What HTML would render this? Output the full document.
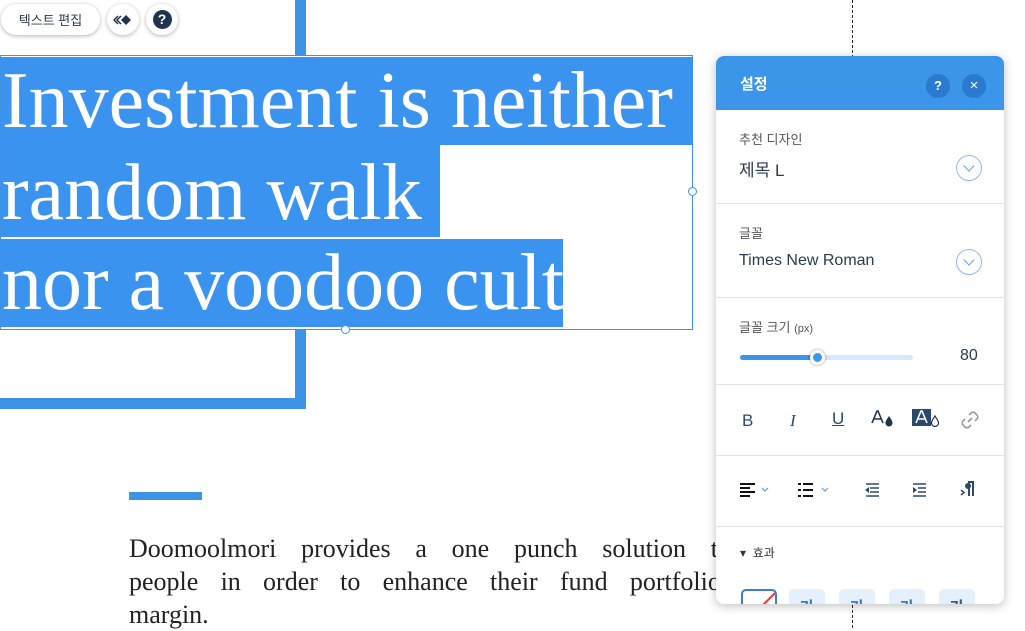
<!DOCTYPE html>
<html><head><meta charset="utf-8"><style>
*{margin:0;padding:0;box-sizing:border-box}
body{width:1025px;height:628px;overflow:hidden;background:#fff;position:relative;font-family:"Liberation Sans","Noto Sans CJK KR",sans-serif}
.abs{position:absolute}
.hl{position:absolute;left:0;background:#3b93f0;color:#fff;font-family:"Liberation Serif",serif;font-size:80px;line-height:88px;white-space:nowrap;padding-left:2px}
.btn{position:absolute;top:4px;height:31px;background:#fff;border-radius:16px;box-shadow:0 1px 4px rgba(0,0,0,.3);display:flex;align-items:center;justify-content:center;font-size:13px;color:#2b3b4e}
.sec{position:absolute;left:0;right:0;height:1px;background:#e0e3e7}
.lbl{position:absolute;left:23px;font-size:13px;color:#555}
.val{position:absolute;left:23px;font-size:17px;color:#2b3b4e}
.chev{position:absolute;right:22px;width:26px;height:26px;border:1.5px solid #8fbbeb;border-radius:50%}
.chev:after{content:"";position:absolute;left:8px;top:6px;width:7px;height:7px;border-right:1.5px solid #5fa0e5;border-bottom:1.5px solid #5fa0e5;transform:rotate(45deg)}
.ic{position:absolute;color:#2b4a6b;font-size:17px}
.pl{position:absolute;left:129px;width:602px;font-family:'Liberation Serif',serif;font-size:26px;line-height:33px;color:#222;text-align:justify;text-align-last:justify}
</style></head><body>
<div class="abs" style="left:295px;top:0;width:11px;height:409px;background:#3d94e6"></div>
<div class="abs" style="left:0;top:398px;width:306px;height:11px;background:#3d94e6"></div>
<div class="abs" style="left:852px;top:0;height:628px;border-left:1.5px dashed #222"></div>
<div class="abs" style="left:0;top:55px;width:693px;height:275px;background:#fff"></div>
<div class="hl" style="top:57px;width:692px;height:88px">Investment is neither</div>
<div class="hl" style="top:145px;width:440px;height:92px;line-height:96px">random walk</div>
<div class="hl" style="top:239px;width:563px;height:88px">nor a voodoo cult</div>
<div class="abs" style="left:0;top:55px;width:693px;height:275px;border:1px solid #3d94e6"></div>
<div class="abs" style="left:688px;top:187px;width:9px;height:9px;border:1px solid #3d94e6;border-radius:50%;background:#fff"></div>
<div class="abs" style="left:341px;top:325px;width:9px;height:9px;border:1px solid #3d94e6;border-radius:50%;background:#fff"></div>
<div class="btn" style="left:1px;width:99px">텍스트 편집</div>
<div class="btn" style="left:107px;width:32px"><svg width="20" height="12" viewBox="0 0 20 12"><path d="M5 2 1 6l4 4M8 2 4 6l4 4" fill="none" stroke="#1f3350" stroke-width="1.5"/><path d="M13 1l5 5-5 5-5-5z" fill="#1f3350"/></svg></div>
<div class="btn" style="left:146px;width:32px"><span style="display:inline-block;width:19px;height:19px;border-radius:50%;background:#1f3350;color:#fff;font-weight:bold;font-size:14px;text-align:center;line-height:19px">?</span></div>
<div class="abs" style="left:129px;top:492px;width:73px;height:8px;background:#3d94e6"></div>
<div class="pl" style="top:532px">Doomoolmori provides a one punch solution to</div>
<div class="pl" style="top:565px">people in order to enhance their fund portfolios</div>
<div class="abs" style="left:129px;top:598px;font-family:'Liberation Serif',serif;font-size:26px;line-height:33px;color:#222">margin.</div>
<div class="abs" style="left:716px;top:56px;width:288px;height:548px;background:#fff;border-radius:8px;box-shadow:0 2px 10px rgba(0,0,0,.25);overflow:hidden">
 <div class="abs" style="left:0;top:0;width:288px;height:54px;background:#3b95e8"></div>
 <div class="abs" style="left:24px;top:17px;color:#fff;font-size:15px;font-weight:bold">설정</div>
 <div class="abs" style="left:210px;top:18px;width:24px;height:24px;border-radius:50%;background:#2a7bcf;color:#fff;font-size:13px;font-weight:bold;text-align:center;line-height:24px">?</div>
 <div class="abs" style="left:246px;top:18px;width:24px;height:24px;border-radius:50%;background:#2a7bcf;color:#fff;font-size:15px;text-align:center;line-height:23px">×</div>
 <div class="lbl" style="top:73px">추천 디자인</div>
 <div class="val" style="top:100px">제목 L</div>
 <div class="chev" style="top:99px"></div>
 <div class="sec" style="top:147px"></div>
 <div class="lbl" style="top:167px">글꼴</div>
 <div class="val" style="top:196px;font-size:16px">Times New Roman</div>
 <div class="chev" style="top:193px"></div>
 <div class="sec" style="top:241px"></div>
 <div class="lbl" style="top:261px">글꼴 크기 <span style="font-size:11px">(px)</span></div>
 <div class="abs" style="left:24px;top:299px;width:173px;height:5px;border-radius:3px;background:#d6e8fb"></div>
 <div class="abs" style="left:24px;top:299px;width:78px;height:5px;border-radius:3px;background:#3b95e8"></div>
 <div class="abs" style="left:94px;top:294px;width:15px;height:15px;border-radius:50%;background:#3b95e8;border:3px solid #fff;box-shadow:0 0 3px rgba(0,0,0,.4)"></div>
 <div class="abs" style="left:244px;top:291px;font-size:16px;color:#2b3b4e">80</div>
 <div class="sec" style="top:328px"></div>
 <div class="ic" style="left:26px;top:355px">B</div>
 <div class="ic" style="left:74px;top:355px;font-family:'Liberation Serif',serif;font-style:italic">I</div>
 <div class="ic" style="left:116px;top:353px;text-decoration:underline">U</div>
 <svg class="abs" style="left:155px;top:353px" width="24" height="20" viewBox="0 0 24 20"><path d="M1 14 6 2h1l5 12M3 10h7" fill="none" stroke="#1f3350" stroke-width="1.6"/><path d="M18 7c-2 3-3.5 5-3.5 7a3.5 3.5 0 0 0 7 0c0-2-1.5-4-3.5-7z" fill="#1f3350"/></svg>
 <svg class="abs" style="left:196px;top:351px" width="30" height="24" viewBox="0 0 30 24"><path d="M0 2h19v17H0z" fill="#2b4a6b"/><path d="M4 16 9 4h1l5 12M6 12h7" fill="none" stroke="#fff" stroke-width="1.6"/><path d="M23 9c-2 3-3.5 5-3.5 7a3.5 3.5 0 0 0 7 0c0-2-1.5-4-3.5-7z" fill="#fff" stroke="#1f3350" stroke-width="1.2"/></svg>
 <svg class="abs" style="left:245px;top:355px" width="18" height="18" viewBox="0 0 18 18"><path d="M7 11 11 7M8 4l2-2a3 3 0 0 1 4 0l2 2a3 3 0 0 1 0 4l-2 2M10 14l-2 2a3 3 0 0 1-4 0l-2-2a3 3 0 0 1 0-4l2-2" fill="none" stroke="#999" stroke-width="1.6"/></svg>
 <div class="sec" style="top:399px"></div>
 <svg class="abs" style="left:24px;top:427px" width="34" height="14" viewBox="0 0 34 14"><path d="M0 1h15M0 5h10M0 9h15M0 13h10" stroke="#111" stroke-width="2"/><path d="M22 5l3 3 3-3" fill="none" stroke="#5f9fe0" stroke-width="1.2"/></svg>
 <svg class="abs" style="left:82px;top:427px" width="34" height="14" viewBox="0 0 34 14"><path d="M0 1h3M0 7h3M0 13h3M5 1h10M5 7h10M5 13h10" stroke="#111" stroke-width="2"/><path d="M24 5l3 3 3-3" fill="none" stroke="#5f9fe0" stroke-width="1.2"/></svg>
 <svg class="abs" style="left:148px;top:427px" width="16" height="14" viewBox="0 0 16 14"><path d="M2 1h13M6 5h9M6 9h9M2 13h13" stroke="#2b4a6b" stroke-width="1.6"/><path d="M5 4 1 7l4 3z" fill="#2b4a6b"/></svg>
 <svg class="abs" style="left:196px;top:427px" width="16" height="14" viewBox="0 0 16 14"><path d="M1 1h13M6 5h8M6 9h8M1 13h13" stroke="#2b4a6b" stroke-width="1.6"/><path d="M1 4l4 3-4 3z" fill="#2b4a6b"/></svg>
 <svg class="abs" style="left:244px;top:425px" width="16" height="16" viewBox="0 0 16 16"><path d="M8 1h6M9 1v14M13 1v14" stroke="#2b4a6b" stroke-width="2"/><path d="M1 9l3 2.5L1 14" fill="none" stroke="#2b4a6b" stroke-width="1.5"/><circle cx="8" cy="5" r="3" fill="#2b4a6b"/></svg>
 <div class="sec" style="top:470px"></div>
 <div class="abs" style="left:24px;top:488px;font-size:12px;color:#333">▾&nbsp; 효과</div>
 <div class="abs" style="left:25px;top:533px;width:36px;height:30px;border:2px solid #3d7fc8;border-radius:5px;overflow:hidden"><div style="position:absolute;left:-4px;top:12px;width:50px;height:2px;background:#e33;transform:rotate(-45deg)"></div></div>
 <div class="abs" style="left:73px;top:533px;width:36px;height:30px;background:#e4f0fc;border-radius:5px;color:#3b7dc4;font-weight:bold;text-align:center;font-size:16px;padding-top:5px">가</div>
 <div class="abs" style="left:123px;top:533px;width:36px;height:30px;background:#e4f0fc;border-radius:5px;color:#3b7dc4;font-weight:bold;text-align:center;font-size:16px;padding-top:5px">가</div>
 <div class="abs" style="left:173px;top:533px;width:36px;height:30px;background:#e4f0fc;border-radius:5px;color:#3b7dc4;font-weight:bold;text-align:center;font-size:16px;padding-top:5px">가</div>
 <div class="abs" style="left:223px;top:533px;width:36px;height:30px;background:#e4f0fc;border-radius:5px;color:#2b5e9c;font-weight:bold;text-align:center;font-size:16px;padding-top:5px">가</div>
</div>
</body></html>
